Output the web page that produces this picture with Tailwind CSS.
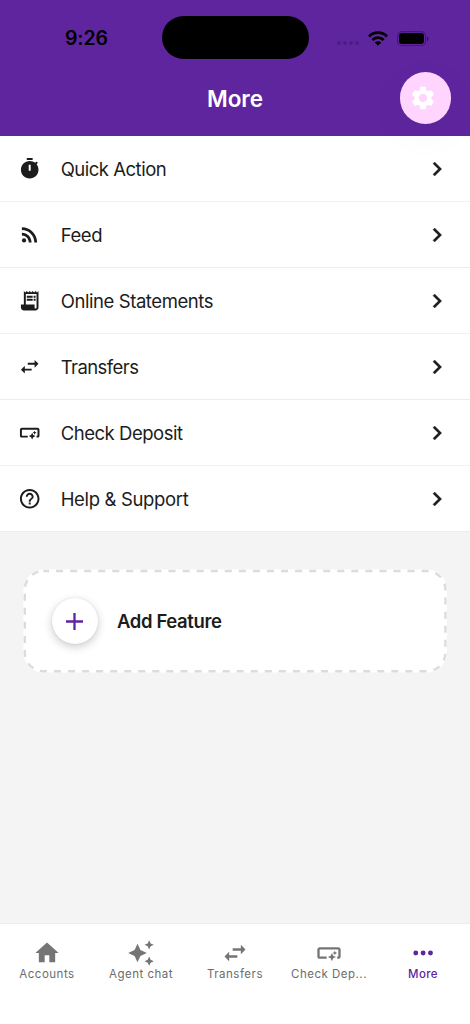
<!DOCTYPE html>
<html lang="en">
<head>
<meta charset="utf-8">
<meta name="viewport" content="width=device-width, initial-scale=1">
<title>More</title>
<script src="https://cdn.jsdelivr.net/npm/@tailwindcss/browser@4"></script>
</head>
<body class="bg-white font-['Inter',sans-serif]">
<svg class="hidden">
  <symbol id="transfer" viewBox="0 0 24 24"><path d="M6.99 11 3 15l3.99 4v-3H14v-2H6.99v-3zM21 9l-3.99-4v3H10v2h7.01v3L21 9z"/></symbol>
  <symbol id="check" viewBox="0 0 24 24"><path d="M22 9v6c0 1.1-.9 2-2 2h-1v-2h1V9H4v6h6v2H4c-1.1 0-2-.9-2-2V9c0-1.1.9-2 2-2h16c1.1 0 2 .9 2 2zM14.5 19l1.09-2.41L18 15.5l-2.41-1.09L14.5 12l-1.09 2.41L11 15.5l2.41 1.09L14.5 19zM17 14l.62-1.38L19 12l-1.38-.62L17 10l-.62 1.38L15 12l1.38.62L17 14z"/></symbol>
  <symbol id="chevron" viewBox="0 0 24 24"><path d="M10 6 8.59 7.41 13.17 12l-4.58 4.59L10 18l6-6z" stroke="currentColor" stroke-width=".3"/></symbol>
</svg>
<div class="flex h-[1024px] w-[470px] flex-col overflow-hidden bg-[#f4f4f4]">
  <header class="relative z-10 h-[136px] shrink-0 bg-[#5f259f]">
    <div class="flex h-[75px] items-center">
      <div class="ml-[65px] w-[96.5px] pt-px text-[19.5px] font-semibold leading-6 text-black"><span class="tracking-[-0.1px]">9:26</span></div>
      <div class="h-[43px] w-[147px] rounded-full bg-black"></div>
      <div class="ml-[28.5px] mt-[11px] flex gap-[2px]">
        <i class="size-[4px] rounded-full bg-[#4c1e80]"></i><i class="size-[4px] rounded-full bg-[#4c1e80]"></i><i class="size-[4px] rounded-full bg-[#4c1e80]"></i><i class="size-[4px] rounded-full bg-[#4c1e80]"></i>
      </div>
      <svg class="ml-[9px] mt-px h-[15px] w-[20px]" viewBox="0 0 20 15"><g fill="none" stroke="#000" stroke-width="2.8"><path d="M1 5.4a12.8 12.8 0 0 1 18 0"/><path d="M4.3 8.9a8.1 8.1 0 0 1 11.4 0"/></g><path d="M6.7 11.5a4.7 4.7 0 0 1 6.6 0L10 14.8z"/></svg>
      <svg class="ml-[9px] mt-px h-[15px] w-[32px]" viewBox="0 0 32 15"><rect x=".6" y=".6" width="28" height="14" rx="4.4" fill="none" stroke="#42196f" stroke-width="1.1"/><rect x="2" y="2" width="25" height="11" rx="3"/><path d="M30 5.2c2 .8 2 4 0 4.8z" fill="#351559"/></svg>
    </div>
    <h1 class="mt-[10px] text-center text-[22.5px] font-semibold leading-7 tracking-[-0.1px] text-white">More</h1>
    <button class="absolute left-[399.7px] top-[72.3px] flex size-[51.6px] items-center justify-center rounded-full bg-[#ffd4ff] pr-[4px] shadow-[0_10px_36px_rgba(0,0,0,0.05)]">
      <svg class="size-[28px] shrink-0" viewBox="0 0 24 24" fill="#fff"><path d="M19.14 12.94c.04-.3.06-.61.06-.94 0-.32-.02-.64-.07-.94l2.03-1.58c.18-.14.23-.41.12-.61l-1.92-3.32c-.12-.22-.37-.29-.59-.22l-2.39.96c-.5-.38-1.03-.7-1.62-.94l-.36-2.54c-.04-.24-.24-.41-.48-.41h-3.84c-.24 0-.43.17-.47.41l-.36 2.54c-.59.24-1.13.57-1.62.94l-2.39-.96c-.22-.08-.47 0-.59.22L2.74 8.87c-.12.21-.08.47.12.61l2.03 1.58c-.05.3-.09.63-.09.94s.02.64.07.94l-2.03 1.58c-.18.14-.23.41-.12.61l1.92 3.32c.12.22.37.29.59.22l2.39-.96c.5.38 1.03.7 1.62.94l.36 2.54c.05.24.24.41.48.41h3.84c.24 0 .44-.17.47-.41l.36-2.54c.59-.24 1.13-.56 1.62-.94l2.39.96c.22.08.47 0 .59-.22l1.92-3.32c.12-.22.07-.47-.12-.61l-2.01-1.58zM12 15.6c-1.98 0-3.6-1.62-3.6-3.6s1.62-3.6 3.6-3.6 3.6 1.62 3.6 3.6-1.62 3.6-3.6 3.6z"/></svg>
    </button>
  </header>

  <nav class="shrink-0 bg-white text-[18.5px] text-[#1c1c1c]">
    <a class="flex h-[66px] items-center border-b border-[#f2f2f2] pl-[18.4px] pr-[19px]">
      <svg class="size-[24px]" viewBox="0 0 24.6 24.6" fill="currentColor"><path d="M9 1h6v2H9zM19.03 7.39l1.42-1.42c-.43-.51-.9-.99-1.41-1.41l-1.42 1.42C16.07 4.74 14.12 4 12 4c-4.97 0-9 4.03-9 9s4.02 9 9 9 9-4.03 9-9c0-2.12-.74-4.07-1.97-5.61zM13 14h-2V8h2v6z"/></svg>
      <span class="ml-[18.3px] flex-1 pt-[3px] tracking-[-0.49px]">Quick Action</span><svg class="size-[28px]" fill="currentColor"><use href="#chevron"/></svg>
    </a>
    <a class="flex h-[66px] items-center border-b border-[#ececec] pl-[18.4px] pr-[19px]">
      <svg class="size-[24px]" viewBox="0 0 24.6 24.6" fill="currentColor"><circle cx="6.18" cy="17.82" r="2.18"/><path d="M4 4.44v2.83c7.03 0 12.73 5.7 12.73 12.73h2.83C19.56 11.41 12.59 4.44 4 4.44zm0 5.66v2.83c3.9 0 7.07 3.17 7.07 7.07h2.83c0-5.47-4.43-9.9-9.9-9.9z"/></svg>
      <span class="ml-[18.3px] flex-1 pt-[3px] tracking-[-0.4px]">Feed</span><svg class="size-[28px]" fill="currentColor"><use href="#chevron"/></svg>
    </a>
    <a class="flex h-[66px] items-center border-b border-[#f2f2f2] pl-[18.4px] pr-[19px]">
      <svg class="size-[24px]" viewBox="0 0 24.6 24.6" fill="currentColor"><path fill-rule="evenodd" d="M6 2l1.5 1.5L9 2l1.5 1.5L12 2l1.5 1.5L15 2l1.5 1.5L18 2l1.5 1.5L21 2v17c0 1.66-1.34 3-3 3H6c-1.66 0-3-1.34-3-3v-3h3zm2 3v11h9v3c0 .55.45 1 1 1s1-.45 1-1V5z"/><path d="M9 7h6v2H9zM16 7h2v2h-2zM9 10h6v2H9zM16 10h2v2h-2z"/></svg>
      <span class="ml-[18.3px] flex-1 pt-[3px] tracking-[-0.42px]">Online Statements</span><svg class="size-[28px]" fill="currentColor"><use href="#chevron"/></svg>
    </a>
    <a class="flex h-[66px] items-center border-b border-[#ececec] pl-[18.4px] pr-[19px]">
      <svg class="size-[24px]" viewBox="0 0 24.6 24.6" fill="currentColor"><use href="#transfer" width="24" height="24"/></svg>
      <span class="ml-[18.3px] flex-1 pt-[3px] tracking-[-0.56px]">Transfers</span><svg class="size-[28px]" fill="currentColor"><use href="#chevron"/></svg>
    </a>
    <a class="flex h-[66px] items-center border-b border-[#f2f2f2] pl-[18.4px] pr-[19px]">
      <svg class="size-[24px]" viewBox="0 0 24.6 24.6" fill="currentColor"><use href="#check" width="24" height="24"/></svg>
      <span class="ml-[18.3px] flex-1 pt-[3px] tracking-[-0.47px]">Check Deposit</span><svg class="size-[28px]" fill="currentColor"><use href="#chevron"/></svg>
    </a>
    <a class="flex h-[66px] items-center border-b border-[#ececec] pl-[18.4px] pr-[19px]">
      <svg class="size-[24px]" viewBox="0 0 24.6 24.6" fill="currentColor"><path d="M11 18h2v-2h-2v2zm1-16C6.48 2 2 6.48 2 12s4.48 10 10 10 10-4.48 10-10S17.52 2 12 2zm0 18c-4.41 0-8-3.59-8-8s3.59-8 8-8 8 3.59 8 8-3.59 8-8 8zm0-14c-2.21 0-4 1.79-4 4h2c0-1.1.9-2 2-2s2 .9 2 2c0 2-3 1.75-3 5h2c0-2.25 3-2.5 3-5 0-2.21-1.79-4-4-4z"/></svg>
      <span class="ml-[18.3px] flex-1 pt-[3px] tracking-[-0.34px]">Help &amp; Support</span><svg class="size-[28px]" fill="currentColor"><use href="#chevron"/></svg>
    </a>
  </nav>

  <main class="flex-1 px-[23px] pt-[37px]">
    <button class="relative flex h-[104px] w-full items-center pl-[29px]">
      <svg class="absolute inset-0 h-[104px] w-[424px]" viewBox="0 0 424 104"><rect x=".4" y=".6" width="423.4" height="103" rx="20" fill="#fff"/><rect x="1.8" y="2" width="420.6" height="100.2" rx="18.6" fill="none" stroke="#dcdcdc" stroke-width="2.4" stroke-dasharray="7.03 7.03" stroke-dashoffset="1.4"/></svg>
      <span class="relative flex size-[46px] items-center justify-center rounded-full bg-white shadow-[0_3px_10px_rgba(0,0,0,0.2),0_0_2px_rgba(60,60,120,0.12)]">
        <svg class="mr-px size-[17px]" viewBox="0 0 17 17"><path d="M8.5 0v17M0 8.5h17" stroke="#5f259f" stroke-width="2.3"/></svg>
      </span>
      <span class="relative ml-[19px] pt-[2px] text-[18.5px] font-semibold tracking-[-0.38px] text-[#1c1c1c]">Add Feature</span>
    </button>
  </main>

  <footer class="grid h-[101px] shrink-0 grid-cols-5 border-t border-[#ececec] bg-white pt-[15px] text-[11.5px] leading-[15px] tracking-[0.5px] text-[#6c6c6c]">
    <a class="flex flex-col items-center"><svg class="size-[28px]" viewBox="0 0 24 24" fill="#757575"><path d="M10 20v-6h4v6h5v-8h3L12 3 2 12h3v8z"/></svg><span>Accounts</span></a>
    <a class="flex flex-col items-center"><svg class="size-[28px]" viewBox="0 0 24 24" fill="#757575"><path d="m19 9 1.25-2.75L23 5l-2.75-1.25L19 1l-1.25 2.75L15 5l2.75 1.25L19 9zm-7.5.5L9 4 6.5 9.5 1 12l5.5 2.5L9 20l2.5-5.5L17 12l-5.5-2.5zM19 15l-1.25 2.75L15 19l2.75 1.25L19 23l1.25-2.75L23 19l-2.75-1.25L19 15z"/></svg><span>Agent chat</span></a>
    <a class="flex flex-col items-center"><svg class="size-[28px]" fill="#757575"><use href="#transfer"/></svg><span>Transfers</span></a>
    <a class="flex flex-col items-center"><svg class="size-[28px]" fill="#757575"><use href="#check"/></svg><span>Check Dep...</span></a>
    <a class="flex flex-col items-center text-[#5f259f]"><svg class="size-[28px]" viewBox="0 0 24 24" fill="currentColor"><circle cx="5.8" cy="12" r="2.1"/><circle cx="12.1" cy="12" r="2.1"/><circle cx="18.4" cy="12" r="2.1"/></svg><span class="font-medium tracking-[0.4px]">More</span></a>
  </footer>
</div>
</body>
</html>
